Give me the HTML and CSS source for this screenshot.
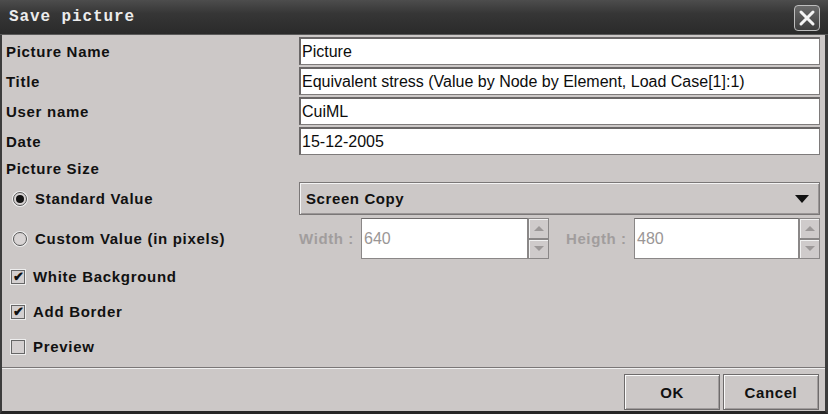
FILE: index.html
```html
<!DOCTYPE html>
<html>
<head>
<meta charset="utf-8">
<link rel="stylesheet" href="styles.css">
</head>
<body>
<div class="window">
  <div class="titlebar">
    <span class="title">Save picture</span>
    <span class="close">
      <svg width="18" height="18" viewBox="0 0 18 18"><path d="M3 3 L15 15 M15 3 L3 15" stroke="#f4f4f4" stroke-width="3" stroke-linecap="round"/></svg>
    </span>
  </div>
  <div class="content">
    <div class="row field">
      <span class="label">Picture Name</span>
      <div class="input">Picture</div>
    </div>
    <div class="row field">
      <span class="label">Title</span>
      <div class="input">Equivalent stress (Value by Node by Element, Load Case[1]:1)</div>
    </div>
    <div class="row field">
      <span class="label">User name</span>
      <div class="input">CuiML</div>
    </div>
    <div class="row field">
      <span class="label">Date</span>
      <div class="input">15-12-2005</div>
    </div>
    <div class="row section">
      <span class="label">Picture Size</span>
    </div>
    <div class="row combo-row">
      <span class="option"><span class="radio checked"></span>Standard Value</span>
      <div class="combo"><span>Screen Copy</span><span class="arrow"></span></div>
    </div>
    <div class="row custom-row">
      <span class="option"><span class="radio"></span>Custom Value (in pixels)</span>
      <div class="sizes">
        <span class="dlabel w">Width :</span>
        <div class="spinner w-spin">
          <div class="spin-input">640</div>
          <div class="spin-btns"><span class="sbtn"><span class="up"></span></span><span class="sbtn"><span class="down"></span></span></div>
        </div>
        <span class="dlabel h">Heigth :</span>
        <div class="spinner h-spin">
          <div class="spin-input">480</div>
          <div class="spin-btns"><span class="sbtn"><span class="up"></span></span><span class="sbtn"><span class="down"></span></span></div>
        </div>
      </div>
    </div>
    <div class="row check-row">
      <span class="option"><span class="check">&#10004;</span>White Background</span>
    </div>
    <div class="row check-row">
      <span class="option"><span class="check">&#10004;</span>Add Border</span>
    </div>
    <div class="row check-row">
      <span class="option"><span class="check empty"></span>Preview</span>
    </div>
  </div>
  <div class="footer">
    <button class="btn ok">OK</button>
    <button class="btn cancel">Cancel</button>
  </div>
</div>
</body>
</html>
```
FILE: styles.css
```css
html, body {
  margin: 0;
  padding: 0;
  background: #2b2b2b;
}
.window {
  width: 828px;
  height: 414px;
  box-sizing: border-box;
  display: flex;
  flex-direction: column;
  background: #ccc8c7;
  border-left: 2px solid #3c3c3c;
  border-right: 3px solid #3c3c3c;
  border-bottom: 3px solid #262626;
  font-family: "Liberation Sans", Arial, sans-serif;
  color: #111;
}
.titlebar {
  height: 35px;
  flex: 0 0 35px;
  margin-left: -2px;
  margin-right: -3px;
  background: linear-gradient(#4d4d4d, #363636 40%, #2a2a2a);
  display: flex;
  align-items: center;
  justify-content: space-between;
  padding: 0 8px 0 9px;
  border-bottom: 1px solid #5a5a5a;
  box-sizing: border-box;
}
.title {
  font-family: "Liberation Mono", "DejaVu Sans Mono", monospace;
  font-weight: bold;
  font-size: 16px;
  letter-spacing: 0.9px;
  color: #ececec;
}
.close {
  width: 24px;
  height: 24px;
  border: 1px solid #bdbdbd;
  border-radius: 4px;
  background: linear-gradient(#6a6a6a, #3e3e3e);
  display: flex;
  align-items: center;
  justify-content: center;
  margin-top: 1px;
}
.content {
  flex: 1;
  padding: 2px 5px 0 4px;
  display: flex;
  flex-direction: column;
}
.row {
  display: flex;
  align-items: center;
}
.label, .option {
  font-weight: bold;
  font-size: 15px;
  letter-spacing: 0.7px;
}
.label {
  width: 293px;
  flex: 0 0 293px;
}
.field {
  height: 28px;
  margin-bottom: 2px;
}
.input {
  flex: 1;
  height: 28px;
  box-sizing: border-box;
  background: #fff;
  border: 1px solid #7e7b7b;
  border-top: 2px solid #6a6767;
  border-left: 2px solid #6a6767;
  padding-left: 1px;
  font-size: 16px;
  display: flex;
  align-items: center;
  color: #0c0c0c;
}
.section {
  height: 22px;
  margin-bottom: 3px;
}
.combo-row {
  height: 33px;
}
.option {
  width: 293px;
  flex: 0 0 293px;
  display: flex;
  align-items: center;
  padding-left: 7px;
  box-sizing: border-box;
}
.radio {
  width: 12px;
  height: 12px;
  border-radius: 50%;
  border: 1px solid #555;
  box-shadow: 0 0 0 1px #eee;
  background: #d8d4d4;
  margin-right: 8px;
  position: relative;
}
.radio.checked::after {
  content: "";
  position: absolute;
  left: 2px;
  top: 2px;
  width: 8px;
  height: 8px;
  border-radius: 50%;
  background: #111;
}
.combo {
  flex: 1;
  height: 33px;
  box-sizing: border-box;
  border: 1px solid #7a7777;
  box-shadow: inset 1px 1px 0 #f4f4f4, inset -1px -1px 0 #9a9696;
  display: flex;
  align-items: center;
  justify-content: space-between;
  padding: 0 10px 0 6px;
  font-weight: bold;
  font-size: 15px;
  letter-spacing: 0.6px;
}
.arrow {
  width: 0;
  height: 0;
  border-left: 7px solid transparent;
  border-right: 7px solid transparent;
  border-top: 8px solid #111;
}
.custom-row {
  height: 41px;
  margin-top: 3px;
}
.sizes {
  flex: 1;
  display: flex;
  align-items: center;
  height: 41px;
}
.dlabel {
  color: #a19d9d;
  font-weight: bold;
  font-size: 15px;
  letter-spacing: 0.6px;
}
.dlabel.w {
  width: 62px;
}
.dlabel.h {
  width: 68px;
  margin-left: 17px;
}
.spinner {
  display: flex;
  height: 41px;
}
.w-spin { width: 188px; }
.h-spin { flex: 1; }
.spin-input {
  flex: 1;
  background: #fff;
  border: 1px solid #8a8787;
  border-top-color: #6e6b6b;
  box-sizing: border-box;
  color: #9a9696;
  font-size: 16px;
  display: flex;
  align-items: center;
  padding-left: 2px;
}
.spin-btns {
  width: 21px;
  display: flex;
  flex-direction: column;
}
.sbtn {
  flex: 1;
  box-sizing: border-box;
  border: 1px solid #8a8787;
  box-shadow: inset 1px 1px 0 #f2f2f2;
  background: #cfcbcb;
  display: flex;
  align-items: center;
  justify-content: center;
}
.up {
  width: 0; height: 0;
  border-left: 5px solid transparent;
  border-right: 5px solid transparent;
  border-bottom: 5px solid #9c9898;
}
.down {
  width: 0; height: 0;
  border-left: 5px solid transparent;
  border-right: 5px solid transparent;
  border-top: 5px solid #9c9898;
}
.check-row {
  height: 35px;
}
.check {
  width: 12px;
  height: 12px;
  border: 1px solid #666;
  box-shadow: 0 0 0 1px #eee;
  background: #d4d0d0;
  margin-right: 8px;
  margin-left: -2px;
  font-size: 13px;
  line-height: 12px;
  text-align: center;
  color: #111;
  letter-spacing: 0;
  overflow: hidden;
}
.footer {
  flex: 0 0 44px;
  border-top: 1px solid #7a7777;
  box-shadow: inset 0 1px 0 #f0f0f0;
  display: flex;
  justify-content: flex-end;
  align-items: flex-start;
  padding: 6px 6px 0 0;
  gap: 3px;
  box-sizing: border-box;
}
.btn {
  height: 36px;
  width: 96px;
  background: #ccc8c7;
  border: 1px solid #6e6b6b;
  box-shadow: inset 1px 1px 0 #fafafa, inset -1px -1px 0 #a09c9c;
  font-family: "Liberation Sans", Arial, sans-serif;
  font-weight: bold;
  font-size: 15px;
  letter-spacing: 0.6px;
  color: #111;
  padding: 0;
}
```
